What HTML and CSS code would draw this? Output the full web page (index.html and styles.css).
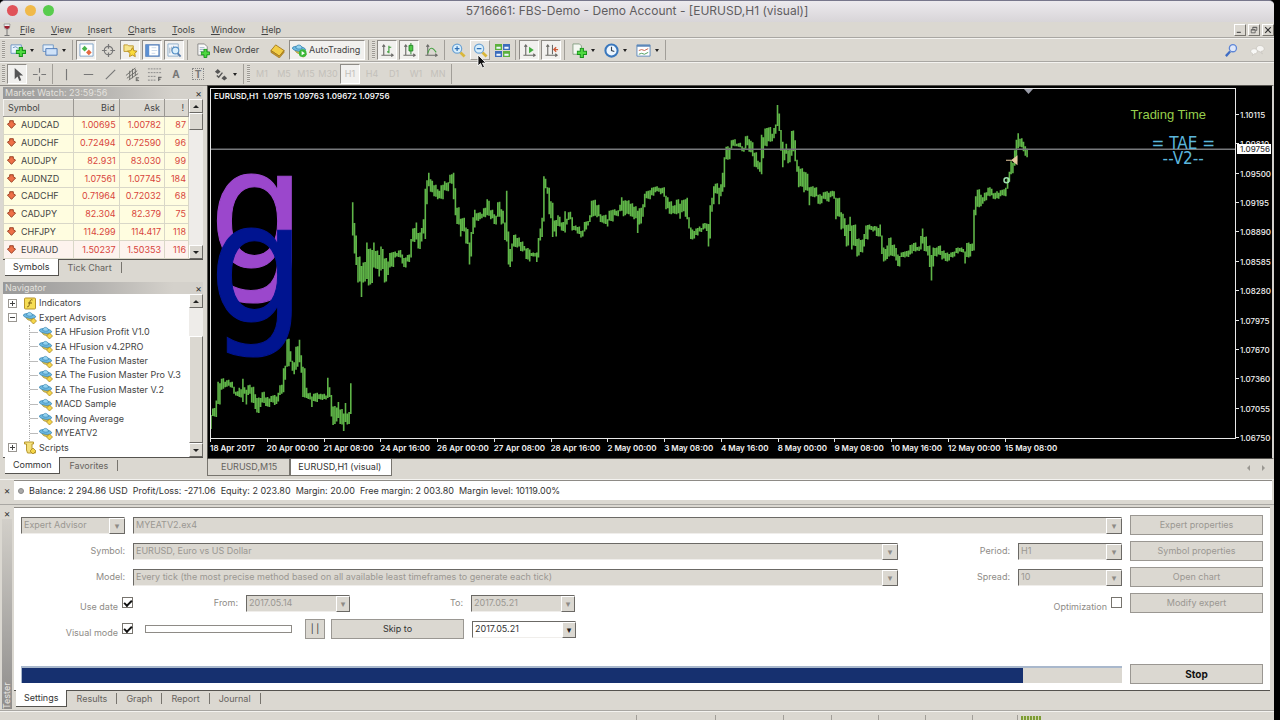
FILE: index.html
```html
<!DOCTYPE html>
<html lang="en">
<head>
<meta charset="UTF-8">
<title>FBS-Demo - Demo Account</title>
<link rel="stylesheet" href="styles.css">
</head>
<body>
<!-- shared icons -->
<svg class="defs" width="0" height="0">
  <symbol id="i-plus" viewBox="0 0 10 10"><path d="M3.5 .5h3v3h3v3h-3v3h-3v-3h-3v-3h3z" fill="#4fd83f" stroke="#16931a"/></symbol>
  <symbol id="i-down" viewBox="0 0 10 10"><path d="M3 .8h4v2.2l2.500 1.500L5 9.300.5 4.500 3 3z" fill="#ee7048" stroke="#8f3218"/></symbol>
  <symbol id="i-ea" viewBox="0 0 14 13"><path d="M3 6c0 4 8 5 8 0z" fill="#d8c050" stroke="#9c8428" stroke-width=".6"/><ellipse cx="6.500" cy="5" rx="6.200" ry="2.300" fill="#6db9e2" stroke="#3684b0" stroke-width=".7" transform="rotate(8 6.500 5)"/><path d="M3.500 4.200C4 .4 9 .4 9.500 4.500 8 5.500 5 5.400 3.500 4.200z" fill="#93d2f0" stroke="#3684b0" stroke-width=".7"/><path d="M10.500 7l3 3-3 3-3-3z" fill="#f5d648" stroke="#a07c18" stroke-width=".7"/></symbol>
  <symbol id="i-axes" viewBox="0 0 16 16"><path d="M4 2v11M1.500 13h12.500M2.500 4L4 2l1.500 2M12 11.500l2 1.500-2 1.500" fill="none" stroke="#6b6b68" stroke-width="1.200"/></symbol>
  <symbol id="i-lens" viewBox="0 0 16 16"><path d="M10 10l4.500 4.500" stroke="#d9b73a" stroke-width="3"/><circle cx="6.500" cy="6" r="4.900" fill="#d9effc" stroke="#6da3d4" stroke-width="1.300"/></symbol>
</svg>

<div class="window">
  <header class="titlebar">
    <span class="lights"><i class="red"></i><i class="yellow"></i><i class="green"></i></span>
    <h1>5716661: FBS-Demo - Demo Account - [EURUSD,H1 (visual)]</h1>
  </header>

  <nav class="menubar">
    <svg class="glass" viewBox="0 0 10 14"><path d="M2 1h6l-.5 4c-.5 2-4.500 2-5 0z" fill="#eee" stroke="#777" stroke-width=".6"/><path d="M2.300 3h5.400c0 4-5 4-5.400 0z" fill="#9c2030"/><path d="M5 6.500V12M2.500 12.500h5" stroke="#777"/></svg>
    <button><u>F</u>ile</button>
    <button><u>V</u>iew</button>
    <button><u>I</u>nsert</button>
    <button><u>C</u>harts</button>
    <button><u>T</u>ools</button>
    <button><u>W</u>indow</button>
    <button><u>H</u>elp</button>
    <span class="mdi">
      <button aria-label="Minimize"><svg viewBox="0 0 10 10"><path d="M1 8h5" stroke="#555" stroke-width="1.500"/></svg></button>
      <button aria-label="Restore"><svg viewBox="0 0 10 10"><path d="M3.500 4V1.500h5v4H7M1.500 4.500h5v4h-5zM3.500 2h5M1.500 5h5" fill="none" stroke="#555"/></svg></button>
      <button aria-label="Close"><svg viewBox="0 0 10 10"><path d="M1.500 1.500l7 7M8.500 1.500l-7 7" stroke="#333" stroke-width="1.500"/></svg></button>
    </span>
  </nav>

  <div class="toolbar main-tools">
    <i class="grip"></i>
    <button class="tool drop" aria-label="New chart"><svg viewBox="0 0 18 16"><path d="M1 2h11v9H1z" fill="#eaf3fd" stroke="#6f96c4"/><path d="M3 5l3-1 3 2" fill="none" stroke="#6f96c4"/><use href="#i-plus" x="6" y="4" width="11" height="11"/></svg></button>
    <button class="tool drop" aria-label="Profiles"><svg viewBox="0 0 18 16"><path d="M1 2h11v7H1z" fill="#e2eefb" stroke="#6f96c4"/><path d="M4 6h12v7H4z" fill="#cfe2f8" stroke="#4b78b8"/></svg></button>
    <i class="sep"></i>
    <button class="tool on" aria-label="Market Watch"><svg viewBox="0 0 16 16"><path d="M1 1h14v13H1z" fill="#fff" stroke="#7ea2c8"/><path d="M6 3l3 3-3 3-3-3z" fill="#49b54a"/><path d="M10.500 7l3 3-3 3-3-3z" fill="#e46a42"/></svg></button>
    <button class="tool" aria-label="Data Window"><svg viewBox="0 0 16 16"><circle cx="8" cy="8" r="4.500" fill="none" stroke="#777" stroke-width="1.300"/><path d="M8 1v5M8 10v5M1 8h5M10 8h5" stroke="#777" stroke-width="1.300"/></svg></button>
    <button class="tool on" aria-label="Navigator"><svg viewBox="0 0 16 16"><path d="M1 2h4l1 1h5v6H1z" fill="#f7e58c" stroke="#c09a34"/><path d="M10 5l1.600 3.200 3.400.5-2.500 2.400.6 3.400L10 12.900l-3.100 1.600.6-3.400L5 8.700l3.400-.5z" fill="#fbdc3c" stroke="#b58b1e"/></svg></button>
    <button class="tool on" aria-label="Terminal"><svg viewBox="0 0 16 16"><path d="M1 2h14v12H1z" fill="#fff" stroke="#4b78b8" stroke-width="1.400"/><path d="M1 2h3.500v12H1z" fill="#5b8fd2"/><path d="M7 5h5M7 8h6M7 11h4" stroke="#c9d8ea"/></svg></button>
    <button class="tool on" aria-label="Strategy Tester"><svg viewBox="0 0 16 16"><path d="M1 1h11v13H1z" fill="#f2f6fb" stroke="#8eacc9"/><path d="M3 11V5M5 9V4M7 8V3" stroke="#9ab"/><circle cx="9" cy="8" r="3.600" fill="#d9effc" stroke="#5791c7" stroke-width="1.200"/><path d="M11.500 11l3 3.500" stroke="#5a7fae" stroke-width="2"/></svg></button>
    <i class="sep"></i>
    <button class="tool wide order"><svg viewBox="0 0 16 16"><path d="M2 1h7l3 3v9H2z" fill="#fafafa" stroke="#8a8a88"/><path d="M4 5h5M4 7h5M4 9h3" stroke="#9ab0c8"/><use href="#i-plus" x="5" y="6" width="10" height="10"/></svg>New Order</button>
    <button class="tool" aria-label="MetaEditor"><svg viewBox="0 0 16 16"><path d="M1 8l5-6 9 6-5 6z" fill="#f2cd46" stroke="#a77c1c"/><path d="M1 8v2l9 6 5-6V8l-5 6z" fill="#c99828" stroke="#94701c" stroke-width=".6"/></svg></button>
    <button class="tool wide on auto"><svg viewBox="0 0 14 13"><use href="#i-ea" width="14" height="13"/><circle cx="10" cy="9" r="3.600" fill="#3cb838"/><path d="M9 7l3 2-3 2z" fill="#fff"/></svg>AutoTrading</button>
    <i class="sep"></i>
    <i class="grip"></i>
    <button class="tool on" aria-label="Bar Chart"><svg viewBox="0 0 16 16"><use href="#i-axes" width="16" height="16"/><path d="M9.500 3v8M7.500 9.500h2M9.500 4.500h2.500" stroke="#3c9c3a" stroke-width="1.200"/></svg></button>
    <button class="tool on" aria-label="Candlesticks"><svg viewBox="0 0 16 16"><use href="#i-axes" width="16" height="16"/><path d="M9.500 0v12" stroke="#25852a"/><path d="M7.500 2.500h4v6h-4z" fill="#4ecb46" stroke="#25852a"/></svg></button>
    <button class="tool" aria-label="Line Chart"><svg viewBox="0 0 16 16"><use href="#i-axes" width="16" height="16"/><path d="M4 11c2-7 5-7 9-1" fill="none" stroke="#4aa346" stroke-width="1.200"/></svg></button>
    <i class="sep"></i>
    <button class="tool" aria-label="Zoom In"><svg viewBox="0 0 16 16"><use href="#i-lens" width="16" height="16"/><path d="M4 6h5M6.500 3.500v5" stroke="#2f6fb5" stroke-width="1.300"/></svg></button>
    <button class="tool hover" aria-label="Zoom Out"><svg viewBox="0 0 16 16"><use href="#i-lens" width="16" height="16"/><path d="M4 6h5" stroke="#2f6fb5" stroke-width="1.300"/></svg></button>
    <button class="tool" aria-label="Tile Windows"><svg viewBox="0 0 16 16"><path d="M0 1h7.500v6.500H0zM8.500 8.500H16V15H8.500z" fill="#5cb13c"/><path d="M8.500 1H16v6.500H8.500zM0 8.500h7.500V15H0z" fill="#3c6cbc"/><path d="M1.500 4H6v2H1.500zM10 4h4.500v2H10zM1.500 11.500H6v2H1.500zM10 11.500h4.500v2H10z" fill="#eef6ff"/></svg></button>
    <i class="sep"></i>
    <button class="tool on" aria-label="Auto Scroll"><svg viewBox="0 0 16 16"><use href="#i-axes" width="16" height="16"/><path d="M7.500 4l5 3.500-5 3.500z" fill="#3fae3c"/></svg></button>
    <button class="tool on" aria-label="Chart Shift"><svg viewBox="0 0 16 16"><use href="#i-axes" width="16" height="16"/><path d="M9 2v10" stroke="#555"/><path d="M15 7h-4M13 4.500L10.500 7 13 9.500" fill="none" stroke="#cf5836" stroke-width="1.400"/></svg></button>
    <i class="sep"></i>
    <button class="tool drop" aria-label="Indicators"><svg viewBox="0 0 18 16"><path d="M2 1h7l2 2v9H2z" fill="#f4f8f2" stroke="#85a183"/><use href="#i-plus" x="6" y="5" width="11" height="11"/></svg></button>
    <button class="tool drop" aria-label="Periods"><svg viewBox="0 0 18 16"><circle cx="9" cy="8" r="6.500" fill="#edf6ff" stroke="#3a78bd" stroke-width="2.200"/><path d="M9 4v4l3 1" fill="none" stroke="#345" stroke-width="1.200"/></svg></button>
    <button class="tool drop" aria-label="Templates"><svg viewBox="0 0 18 16"><path d="M2 2h14v12H2z" fill="#fff" stroke="#5c88ba"/><path d="M2 3h14" stroke="#5c88ba" stroke-width="2"/><path d="M4 8l3-1 3 1 4-2" fill="none" stroke="#c4604a"/><path d="M4 12l3-1 3 1 4-2" fill="none" stroke="#4a9a58"/></svg></button>
    <i class="sep"></i>
    <span class="right">
      <button class="tool" aria-label="Search"><svg viewBox="0 0 16 16"><path d="M6.500 9L2 14" stroke="#3e6cc4" stroke-width="2.400"/><circle cx="9.500" cy="5.500" r="3.800" fill="#dfe8fa" stroke="#5e86d6" stroke-width="1.400"/></svg></button>
      <button class="tool" aria-label="Chat"><svg viewBox="0 0 18 14"><path d="M12 1c6 0 7 7 1 7l2 3-4-3C6 7 7 1 12 1z" fill="#f6f5f2" stroke="#c2bfb8" stroke-width=".7"/><path d="M5 5c5 0 5 6 0 6l-2 2v-2.500C-1 9 1 5 5 5z" fill="#f8f8f6" stroke="#c2bfb8" stroke-width=".7"/></svg></button>
    </span>
  </div>

  <div class="toolbar line-tools">
    <i class="grip"></i>
    <button class="tool on" aria-label="Cursor"><svg viewBox="0 0 16 16"><path d="M5 1v12l3-3 2 5 2-1-2-5h4z" fill="#555"/></svg></button>
    <button class="tool" aria-label="Crosshair"><svg viewBox="0 0 16 16"><path d="M8 1v5M8 10v5M1 8h5M10 8h5" stroke="#777" stroke-width="1.200"/></svg></button>
    <i class="sep"></i>
    <button class="tool" aria-label="Vertical Line"><svg viewBox="0 0 16 16"><path d="M8 2v12" stroke="#777" stroke-width="1.200"/></svg></button>
    <button class="tool" aria-label="Horizontal Line"><svg viewBox="0 0 16 16"><path d="M3 8h10" stroke="#777" stroke-width="1.200"/></svg></button>
    <button class="tool" aria-label="Trendline"><svg viewBox="0 0 16 16"><path d="M3 13L13 3" stroke="#777" stroke-width="1.200"/></svg></button>
    <button class="tool" aria-label="Equidistant Channel"><svg viewBox="0 0 16 16"><path d="M1 9L11 1M2 12L13 4M4 14L14 7M5 4v9M8 2v10M11 2v7M12 11v4M12 11.500h3M12 13h2M12 14.500h3" stroke="#6b6b68"/></svg></button>
    <button class="tool" aria-label="Fibonacci"><svg viewBox="0 0 16 16"><path d="M1 2h14M1 6h14M1 10h9M1 14h9" stroke="#888" stroke-dasharray="2 1"/><path d="M12.500 15v-4.500M12.500 11h3M12.500 13h2" stroke="#555"/></svg></button>
    <button class="tool letter">A</button>
    <button class="tool letter boxed"><span>T</span></button>
    <button class="tool drop" aria-label="Arrows"><svg viewBox="0 0 18 16"><path d="M5 2l3 3-3 2.500L2 5z" fill="#555"/><path d="M4 9l2 2 4-5" fill="none" stroke="#555" stroke-width="1.500"/><path d="M12 9l3 3-3 2.500L9 12z" fill="#555"/></svg></button>
    <i class="sep"></i>
    <i class="grip"></i>
    <button class="tool tf" disabled>M1</button>
    <button class="tool tf" disabled>M5</button>
    <button class="tool tf" disabled>M15</button>
    <button class="tool tf" disabled>M30</button>
    <button class="tool tf on" disabled>H1</button>
    <button class="tool tf" disabled>H4</button>
    <button class="tool tf" disabled>D1</button>
    <button class="tool tf" disabled>W1</button>
    <button class="tool tf" disabled>MN</button>
    <i class="sep"></i>
  </div>

  <div class="workspace">
    <aside class="side">
      <section class="panel watch">
        <h2>Market Watch: 23:59:56<button aria-label="Close">×</button></h2>
        <div class="panel-body">
          <table>
            <thead><tr><th>Symbol</th><th>Bid</th><th>Ask</th><th>!</th></tr></thead>
            <tbody>
              <tr><td><svg><use href="#i-down"/></svg>AUDCAD</td><td>1.00695</td><td>1.00782</td><td>87</td></tr>
              <tr><td><svg><use href="#i-down"/></svg>AUDCHF</td><td>0.72494</td><td>0.72590</td><td>96</td></tr>
              <tr><td><svg><use href="#i-down"/></svg>AUDJPY</td><td>82.931</td><td>83.030</td><td>99</td></tr>
              <tr><td><svg><use href="#i-down"/></svg>AUDNZD</td><td>1.07561</td><td>1.07745</td><td>184</td></tr>
              <tr><td><svg><use href="#i-down"/></svg>CADCHF</td><td>0.71964</td><td>0.72032</td><td>68</td></tr>
              <tr><td><svg><use href="#i-down"/></svg>CADJPY</td><td>82.304</td><td>82.379</td><td>75</td></tr>
              <tr><td><svg><use href="#i-down"/></svg>CHFJPY</td><td>114.299</td><td>114.417</td><td>118</td></tr>
              <tr class="alt"><td><svg><use href="#i-down"/></svg>EURAUD</td><td>1.50237</td><td>1.50353</td><td>116</td></tr>
            </tbody>
          </table>
          <div class="scroll"><b class="up"></b><i></i><b class="dn"></b></div>
        </div>
        <div class="tabs"><button class="current">Symbols</button><button>Tick Chart</button></div>
      </section>

      <section class="panel navigator">
        <h2>Navigator<button aria-label="Close">×</button></h2>
        <div class="panel-body">
          <ul class="tree">
            <li><s class="plus"></s><svg viewBox="0 0 13 13"><rect x="1" y="1" width="11" height="11" rx="1" fill="#f6dd55" stroke="#b8942c"/><path d="M9 3c-2-1-2.500 1-3 3.500S5 10.500 3.500 9.500M4.500 6h4" fill="none" stroke="#7a5c10"/></svg>Indicators</li>
            <li><s class="minus"></s><svg><use href="#i-ea"/></svg>Expert Advisors</li>
            <li class="child"><svg><use href="#i-ea"/></svg>EA HFusion Profit V1.0</li>
            <li class="child"><svg><use href="#i-ea"/></svg>EA HFusion v4.2PRO</li>
            <li class="child"><svg><use href="#i-ea"/></svg>EA The Fusion Master</li>
            <li class="child"><svg><use href="#i-ea"/></svg>EA The Fusion Master Pro V.3</li>
            <li class="child"><svg><use href="#i-ea"/></svg>EA The Fusion Master V.2</li>
            <li class="child"><svg><use href="#i-ea"/></svg>MACD Sample</li>
            <li class="child"><svg><use href="#i-ea"/></svg>Moving Average</li>
            <li class="child"><svg><use href="#i-ea"/></svg>MYEATV2</li>
            <li><s class="plus"></s><svg viewBox="0 0 13 13"><path d="M1 1h9v2H8.500v6H11l1 3H4L3 9V3H1z" fill="#f3df7a" stroke="#b8982e"/><path d="M9.500 7l3 3-3 3-3-3z" fill="#f5d648" stroke="#a07c18" stroke-width=".7"/></svg>Scripts</li>
          </ul>
          <div class="scroll low"><b class="up"></b><i></i><b class="dn"></b></div>
        </div>
        <div class="tabs"><button class="current">Common</button><button>Favorites</button></div>
      </section>
    </aside>

    <main class="charts">
      <div class="chart">
        <div class="plot">
          <svg class="bars" viewBox="211 90 1024 348" preserveAspectRatio="none">
            <path id="bars"/>
            <path class="bid" d="M211 150h1024"/>
            <path d="M1024 90h9l-4.500 5z" fill="#9a9ca8"/>
            <path d="M1006 161h6l5-4v8l-5-4" fill="#e8c9a0" stroke="#e8c9a0"/>
            <circle cx="1006.500" cy="181" r="2.500" fill="none" stroke="#9fe0b0" stroke-width="1.500"/>
          </svg>
          <p class="ohlc">EURUSD,H1&nbsp; 1.09715 1.09763 1.09672 1.09756</p>
          <span class="big-g purple">g</span>
          <span class="big-g blue">g</span>
          <span class="note time">Trading Time</span>
          <span class="note tae">= TAE =<br>--V2--</span>
        </div>
        <div class="prices">
          <span>1.10115</span><span>1.09810</span><span>1.09500</span><span>1.09195</span><span>1.08890</span><span>1.08585</span><span>1.08280</span><span>1.07975</span><span>1.07670</span><span>1.07360</span><span>1.07055</span><span>1.06750</span>
          <b>1.09756</b>
        </div>
        <div class="times">
          <span>18 Apr 2017</span><span>20 Apr 00:00</span><span>21 Apr 08:00</span><span>24 Apr 16:00</span><span>26 Apr 00:00</span><span>27 Apr 08:00</span><span>28 Apr 16:00</span><span>2 May 00:00</span><span>3 May 08:00</span><span>4 May 16:00</span><span>8 May 00:00</span><span>9 May 08:00</span><span>10 May 16:00</span><span>12 May 00:00</span><span>15 May 08:00</span>
        </div>
      </div>
      <div class="chart-tabs">
        <button>EURUSD,M15</button><button class="current">EURUSD,H1 (visual)</button>
        <span class="arrows"><i></i><i></i></span>
      </div>
    </main>
  </div>

  <section class="balance">
    <button class="close" aria-label="Close">×</button>
    <p><i></i>Balance: 2 294.86 USD&nbsp; Profit/Loss: -271.06&nbsp; Equity: 2 023.80&nbsp; Margin: 20.00&nbsp; Free margin: 2 003.80&nbsp; Margin level: 10119.00%</p>
  </section>

  <section class="tester">
    <div class="tester-side"><button class="close" aria-label="Close">×</button><span>Tester</span></div>
    <div class="tester-main">
      <form class="settings">
        <div class="row">
          <span class="combo kind"><select aria-label="Type" disabled><option>Expert Advisor</option></select></span>
          <span class="combo grow"><select aria-label="Expert" disabled><option>MYEATV2.ex4</option></select></span>
          <button class="btn" type="button" disabled>Expert properties</button>
        </div>
        <div class="row">
          <label class="first" for="symbol">Symbol:</label>
          <span class="combo grow"><select id="symbol" disabled><option>EURUSD, Euro vs US Dollar</option></select></span>
          <label class="second" for="period">Period:</label>
          <span class="combo kind"><select id="period" disabled><option>H1</option></select></span>
          <button class="btn" type="button" disabled>Symbol properties</button>
        </div>
        <div class="row">
          <label class="first" for="model">Model:</label>
          <span class="combo grow"><select id="model" disabled><option>Every tick (the most precise method based on all available least timeframes to generate each tick)</option></select></span>
          <label class="second" for="spread">Spread:</label>
          <span class="combo kind"><select id="spread" disabled><option>10</option></select></span>
          <button class="btn" type="button" disabled>Open chart</button>
        </div>
        <div class="row">
          <label class="check">Use date<input type="checkbox" checked></label>
          <label class="from" for="from">From:</label>
          <span class="combo kind date"><select id="from" disabled><option>2017.05.14</option></select></span>
          <label class="to" for="to">To:</label>
          <span class="combo kind date"><select id="to" disabled><option>2017.05.21</option></select></span>
          <label class="check optim">Optimization<input type="checkbox"></label>
          <button class="btn" type="button" disabled>Modify expert</button>
        </div>
        <div class="row">
          <label class="check">Visual mode<input type="checkbox" checked></label>
          <input class="speed" type="range" aria-label="Speed">
          <button class="btn pause" type="button">| |</button>
          <button class="btn skip" type="button">Skip to</button>
          <span class="combo kind date"><select aria-label="Skip to date"><option>2017.05.21</option></select></span>
        </div>
        <div class="row run">
          <progress value="91" max="100" aria-label="Test progress"></progress>
          <button class="btn stop" type="button">Stop</button>
        </div>
      </form>
      <div class="tabs">
        <button class="current">Settings</button><button>Results</button><button>Graph</button><button>Report</button><button>Journal</button>
      </div>
    </div>
  </section>

  <footer class="status"><i></i><i></i><i></i><i></i><i></i><i></i><i></i><i></i><b></b></footer>
</div>
<svg class="pointer" viewBox="0 0 10 15"><path d="M1 1v11l2.500-2.500L5.500 14l2-1-2-4H9z" fill="#111" stroke="#fff" stroke-width=".8"/></svg>
<script src="script.js"></script>
</body>
</html>
```
FILE: styles.css
```css
* {
  box-sizing: border-box;
}
body {
  margin: 0;
  height: 100vh;
  overflow: hidden;
  background: #000;
  color: #444;
  font: 9px/12px Inter, "Liberation Sans", sans-serif;
}
button, select, input {
  font: inherit;
  color: inherit;
  margin: 0;
}
button {
  padding: 0;
  border: 0;
  background: none;
  white-space: nowrap;
}
h1, h2, p, ul {
  margin: 0;
  padding: 0;
  font-weight: normal;
}
.defs {
  display: block;
}
.window {
  height: 100vh;
  margin-right: 6px;
  display: flex;
  flex-direction: column;
  background: #dbd8d1;
  border-top: 1px solid #77778c;
  border-radius: 5px 5px 0 0;
  overflow: hidden;
}

/* title and menu */
.titlebar {
  height: 21px;
  flex: none;
  position: relative;
  background: linear-gradient(#eceaee, #d8d5d8);
}
.titlebar h1 {
  font-size: 12px;
  line-height: 20px;
  text-align: center;
  color: #5f5d5f;
}
.lights {
  position: absolute;
  left: 7px;
  top: 4px;
  display: flex;
  gap: 7px;
}
.lights i {
  width: 11px;
  height: 11px;
  border-radius: 50%;
  background: #e0525a;
}
.lights .yellow { background: #f0b94a; }
.lights .green { background: #58cc4e; }

.menubar {
  height: 15px;
  flex: none;
  display: flex;
  align-items: center;
  gap: 16px;
  padding-left: 2px;
}
.menubar u {
  text-underline-offset: 1px;
}
.glass {
  width: 10px;
  height: 14px;
  margin-right: -8px;
}
.mdi {
  margin-left: auto;
  display: flex;
  gap: 2px;
}
.mdi button {
  width: 12px;
  height: 12px;
  padding: 1px;
  border: 1px solid;
  border-color: #fff #77746e #77746e #fff;
}
.mdi svg {
  display: block;
  width: 100%;
}

/* toolbars */
.toolbar {
  height: 24px;
  flex: none;
  display: flex;
  align-items: center;
  border-top: 1px solid #a9a7a3;
  box-shadow: inset 0 1px #f4f3f0;
  padding: 1px 0 0 1px;
}
.grip {
  width: 3px;
  height: 18px;
  margin: 0 1px;
  background: repeating-linear-gradient(#9d9a94 0 1px, #e4e2dd 1px 2px);
}
.sep {
  width: 1px;
  height: 20px;
  margin: 0 2px;
  background: #a19e98;
}
.tool {
  width: 20px;
  height: 20px;
  margin: 0 1px;
  border: 1px solid transparent;
  display: flex;
  align-items: center;
  justify-content: center;
  font-size: 9px;
}
.tool svg {
  width: 15px;
  height: 15px;
  flex: none;
}
.tool.on {
  background: #f1f0ee;
  border-color: #8e8b86 #fff #fff #8e8b86;
}
.tool.hover {
  background: #e8e6e2;
  border-color: #fff #a19e98 #a19e98 #fff;
}
.tool.drop {
  width: 30px;
  gap: 3px;
}
.tool.drop svg {
  width: 17px;
}
.tool.drop::after {
  content: "";
  border: 2px solid transparent;
  border-top: 3px solid #222;
  border-bottom: 0;
}
.tool.wide {
  width: auto;
  gap: 2px;
  padding: 0 5px 0 4px;
}
.tool.auto {
  padding: 0 4px 0 2px;
}
.main-tools .right {
  margin-left: auto;
  display: flex;
  gap: 4px;
  padding-right: 6px;
}
.letter {
  font-weight: bold;
  font-size: 10px;
  color: #777;
}
.boxed span {
  border: 1px dotted #888;
  width: 12px;
  line-height: 10px;
}
.tool.tf {
  color: #c3c0ba;
}

/* left side */
.workspace {
  flex: 1;
  min-height: 0;
  display: flex;
}
.side {
  width: 207px;
  padding: 1px 4px 3px 3px;
  display: flex;
  flex-direction: column;
  gap: 4px;
  border-top: 1px solid #8e8b86;
}
.panel {
  display: flex;
  flex-direction: column;
  min-height: 0;
}
.watch {
  height: 191px;
}
.navigator {
  flex: 1;
}
.panel h2 {
  height: 12px;
  flex: none;
  display: flex;
  justify-content: space-between;
  padding-left: 2px;
  font-size: 9px;
  line-height: 12px;
  color: #e4e2de;
  background: linear-gradient(90deg, #999 0%, #b3b1ae 45%, #d4d1cb 85%);
}
.panel h2 button, .close {
  width: 9px;
  color: #333;
  font-size: 10px;
  line-height: 12px;
}
.panel-body {
  flex: 1;
  min-height: 0;
  display: flex;
  background: #fff;
}
.panel table {
  flex: 1;
  border-collapse: collapse;
  table-layout: fixed;
}
.panel th {
  height: 17px;
  padding: 0 4px;
  font-weight: normal;
  text-align: right;
  background: #dbd8d1;
  border: 1px solid;
  border-color: #f4f3f0 #9a9792 #9a9792 #f4f3f0;
}
.panel th:first-child {
  width: 70px;
  text-align: left;
}
.panel th:last-child {
  width: 24px;
}
.panel td {
  padding: 0 3px;
  text-align: right;
  color: #d8453c;
  background: #fffde0;
  border: 1px solid #d9d7c8;
}
.panel td:first-child {
  color: #444;
  text-align: left;
}
.panel td:last-child {
  padding: 0 2px;
}
.alt td {
  background: #fdf3ee;
}
.panel td svg {
  width: 9px;
  height: 9px;
  margin-right: 5px;
  vertical-align: -1px;
}
.scroll {
  width: 14px;
  display: flex;
  flex-direction: column;
  background: #eeece9;
}
.scroll b, .scroll i {
  height: 14px;
  background: #dbd8d1;
  border: 1px solid;
  border-color: #fff #6b6965 #6b6965 #fff;
}
.scroll b {
  display: flex;
  align-items: center;
  justify-content: center;
}
.scroll i {
  height: 17px;
  margin-bottom: auto;
}
.scroll.low i {
  height: auto;
  flex: 1;
  margin: 28px 0 0;
}
.scroll b::after {
  content: "";
  border: 3px solid transparent;
  border-bottom: 3px solid #222;
  border-top: 0;
}
.scroll .dn::after {
  border-top: 3px solid #222;
  border-bottom: 0;
}

.tabs {
  height: 19px;
  flex: none;
  display: flex;
  align-items: flex-start;
  border-top: 1px solid #55534f;
  padding-left: 2px;
}
.tabs button {
  height: 16px;
  padding-left: 9px;
  color: #66635e;
}
.tabs .current {
  margin-top: -1px;
  height: 17px;
  padding: 0 8px;
  color: #333;
  background: #fff;
  border: solid #55534f;
  border-width: 0 1px 1px 0;
}
.tabs button:not(.current)::after {
  content: "";
  border-right: 1px solid #77746e;
  margin-left: 9px;
}

.tree {
  flex: 1;
  list-style: none;
  display: flex;
  flex-direction: column;
  padding: 2px 0 2px 5px;
}
.tree li {
  flex: 1;
  display: flex;
  align-items: center;
  gap: 2px;
  white-space: nowrap;
}
.tree svg {
  width: 14px;
  height: 13px;
}
.tree s {
  width: 9px;
  height: 9px;
  margin-right: 4px;
  border: 1px solid #9a9792;
  background: linear-gradient(#444, #444) center / 5px 1px no-repeat;
}
.tree .plus {
  background: linear-gradient(#444, #444) center / 5px 1px no-repeat, linear-gradient(#444, #444) center / 1px 5px no-repeat;
}
.tree .child {
  margin-left: 21px;
  padding-left: 9px;
  background: linear-gradient(#bbb, #bbb) 0 50% / 8px 1px no-repeat;
  border-left: 1px dotted #aaa;
}

/* chart */
.charts {
  flex: 1;
  min-width: 0;
  display: flex;
  flex-direction: column;
}
.chart {
  flex: 1;
  min-height: 0;
  display: grid;
  grid-template-columns: 1fr 35px;
  grid-template-rows: 1fr 18px;
  padding: 2px 1px 1px 2px;
  background: #000;
  border: 1px solid #55534f;
  border-right: 2px solid #d2d0cc;
  color: #f2f2f2;
}
.plot {
  position: relative;
  border: 1px solid #e8e8e8;
}
.bars {
  display: block;
  position: absolute;
  width: 100%;
  height: 100%;
}
#bars {
  fill: none;
  stroke: #5fb548;
  stroke-width: 1.6;
}
.bid {
  stroke: #77797c;
  stroke-width: 1.5;
}
.ohlc {
  position: absolute;
  left: 3px;
  top: 1px;
  font-size: 8px;
  font-weight: 600;
}
.big-g {
  position: absolute;
  left: -2px;
  font: 168px/168px "DejaVu Sans Condensed", "DejaVu Sans", sans-serif;
  -webkit-text-stroke: 1px;
}
.purple {
  top: 37px;
  color: #9b47cc;
}
.blue {
  top: 91px;
  color: #001490;
}
.note {
  position: absolute;
  text-align: center;
}
.time {
  right: 29px;
  top: 18px;
  font: 13px/16px "Liberation Sans", sans-serif;
  color: #97cf4c;
}
.tae {
  right: 20px;
  top: 47px;
  font: 17px/15px "DejaVu Sans Condensed", sans-serif;
  color: #5cb6dc;
}
.prices {
  position: relative;
  display: flex;
  flex-direction: column;
  justify-content: space-between;
  padding-top: 22px;
  margin-bottom: -4px;
  font-size: 8px;
  font-weight: 500;
  line-height: 10px;
  white-space: nowrap;
}
.prices span::before {
  content: "";
  display: inline-block;
  width: 3px;
  height: 1px;
  margin-right: 1px;
  vertical-align: 3px;
  background: #e8e8e8;
}
.prices b {
  position: absolute;
  left: 1px;
  right: 0;
  top: 56px;
  padding-left: 3px;
  font-weight: 500;
  background: #fff;
  color: #333;
}
.times {
  width: 83%;
  display: grid;
  grid-template-columns: repeat(15, 1fr);
  font-size: 8px;
  font-weight: 600;
  line-height: 12px;
  white-space: nowrap;
}
.times span::before {
  content: "";
  display: block;
  width: 1px;
  height: 3px;
  background: #e8e8e8;
}
.chart-tabs {
  height: 20px;
  flex: none;
  display: flex;
  align-items: flex-start;
}
.chart-tabs button {
  height: 17px;
  padding: 0 12px 0 13px;
  color: #66635e;
  border: solid #77746e;
  border-width: 0 1px 1px 1px;
}
.chart-tabs .current {
  padding: 0 10px 0 7px;
  background: #fff;
  color: #333;
}
.arrows {
  margin-left: auto;
  display: flex;
  gap: 12px;
  padding: 6px 9px;
}
.arrows i {
  border: 3px solid transparent;
  border-right: 3px solid #9a9792;
  border-left: 0;
}
.arrows i:last-child {
  border-left: 3px solid #9a9792;
  border-right: 0;
}

/* balance line */
.balance {
  height: 26px;
  flex: none;
  display: flex;
  padding: 0 2px 4px 2px;
  border-top: 1px solid #f4f3f0;
  border-bottom: 1px solid #a9a7a3;
}
.close {
  flex: none;
  width: 10px;
}
.balance p {
  flex: 1;
  margin-left: 2px;
  padding-left: 4px;
  display: flex;
  align-items: center;
  background: #fff;
  border-top: 1px solid #8e8b86;
  color: #333;
}
.balance i {
  width: 6px;
  height: 6px;
  margin-right: 5px;
  border-radius: 50%;
  background: #aaa;
  border: 1px solid #888;
}

/* tester */
.tester {
  height: 206px;
  flex: none;
  display: flex;
  padding: 2px 4px 1px 2px;
  border-bottom: 1px solid #a9a7a3;
}
.tester-side {
  width: 12px;
  display: flex;
  flex-direction: column;
}
.tester-side span {
  flex: 1;
  margin-right: 2px;
  writing-mode: vertical-rl;
  transform: rotate(180deg);
  line-height: 10px;
  color: #e8e6e2;
  background: linear-gradient(0deg, #d2cfc9, #a9a7a4 60%, #8f8d8b);
}
.tester-main {
  flex: 1;
  display: flex;
  flex-direction: column;
}
.settings {
  flex: 1;
  display: flex;
  flex-direction: column;
  gap: 6px;
  padding: 7px 7px 0 7px;
  background: #fff;
  border-top: 1px solid #8e8b86;
  color: #8e8b86;
}
.row {
  height: 20px;
  flex: none;
  display: flex;
  align-items: center;
  gap: 8px;
}
.run {
  margin-top: 19px;
}
.first,
.second {
  width: 104px;
  text-align: right;
}
.check {
  width: 112px;
  height: 20px;
  display: flex;
  align-items: flex-end;
  justify-content: flex-end;
  gap: 4px;
}
.check input {
  appearance: none;
  width: 11px;
  height: 11px;
  margin: 0 0 5px;
  border: 1px solid #77746e;
  background: #fff;
  display: grid;
  place-content: center;
}
.check input:checked::before {
  content: "";
  width: 6px;
  height: 3px;
  border: solid #111;
  border-width: 0 0 2px 2px;
  transform: rotate(-45deg);
}
.optim {
  margin-left: auto;
}
.from {
  width: 97px;
  text-align: right;
}
.to {
  width: 105px;
  text-align: right;
}
.combo {
  position: relative;
  display: flex;
  height: 17px;
}
.kind {
  width: 104px;
}
.grow {
  flex: 1;
}
.combo select {
  appearance: none;
  width: 100%;
  padding: 0 16px 0 2px;
  border: 1px solid;
  border-color: #6b6965 #f0eeeb #f0eeeb #6b6965;
  border-radius: 0;
  background: #fff;
  color: #333;
}
.combo select:disabled {
  opacity: 1;
  background: #dbd8d1;
  color: #9a9792;
}
.combo::after {
  content: "▾";
  position: absolute;
  right: 0;
  top: 1px;
  bottom: 0;
  width: 14px;
  text-align: center;
  line-height: 14px;
  font-family: "DejaVu Sans", sans-serif;
  background: #dbd8d1;
  border: 1px solid;
  border-color: #fff #6b6965 #6b6965 #fff;
  pointer-events: none;
}
.date::after {
  width: 12px;
}
.skip + .date::after {
  color: #222;
}
.btn {
  width: 133px;
  height: 20px;
  background: #dbd8d1;
  border: 1px solid #9a9792;
  color: #333;
}
.btn:disabled {
  color: #9a9792;
}
.speed {
  appearance: none;
  width: 147px;
  height: 8px;
  margin: 0 5px 0 4px;
  background: #fff;
  border: 1px solid #8e8b86;
}
.speed::-webkit-slider-thumb {
  appearance: none;
  width: 0;
}
.pause {
  width: 20px;
  margin-right: -2px;
}
.stop {
  font-weight: bold;
  font-size: 10px;
  color: #111;
}
progress {
  appearance: none;
  flex: 1;
  height: 17px;
  border: solid #a9b8cc;
  border-width: 2px 0 0 1px;
}
progress::-webkit-progress-bar {
  background: #dbd8d1;
}
progress::-webkit-progress-value {
  background: #16306f;
}

/* status bar */
.status {
  height: 9px;
  flex: none;
  display: grid;
  grid-template-columns: 50% 79px 68px 48px 47px 47px 47px 45px 1fr;
  border-top: 1px solid #f4f3f0;
  padding-top: 3px;
}
.status i {
  border-right: 1px solid #a19e98;
}
.status b {
  width: 20px;
  margin: 1px 0 0 3px;
  background: repeating-linear-gradient(90deg, #7d9c34 0 2px, #cfd8ae 2px 3px);
}
.pointer {
  position: absolute;
  left: 477px;
  top: 54px;
  width: 10px;
  height: 15px;
}
```
FILE: script.js
```js
// [x, high, low] points of the price curve, two segments (gap on 21 Apr)
var segments = [
[[211,415,429],[214,407,417],[217,400,417],[219,382,405],[222,378,390],[225,382,388],[228,379,387],[232,382,388],[234,388,395],[237,391,396],[240,388,398],[243,378,402],[245,387,395],[247,390,405],[249,384,395],[253,387,403],[255,393,410],[258,397,413],[260,398,408],[263,391,403],[267,397,407],[272,395,403],[275,395,405],[278,392,402],[281,385,395],[283,367,393],[286,365,380],[288,339,367],[290,350,362],[292,362,372],[294,362,375],[296,347,370],[298,345,368],[300,339,363],[302,355,373],[304,367,398],[307,387,398],[309,393,400],[312,395,407],[315,393,402],[320,393,400],[325,394,400],[328,377,398],[330,387,398],[332,395,417],[334,405,425],[337,407,422],[338,402,418],[341,408,425],[344,413,431],[346,403,423],[348,412,425],[350,411,424],[351,383,415]],
[[352.7,203,236],[355,222,255],[357,235,266],[359,257,283],[361,265,298],[364,262,283],[367,243,280],[369,248,286],[372,250,284],[374,243,268],[377,250,270],[378,255,277],[381,247,272],[383,248,270],[386,258,283],[388,262,276],[391,252,268],[397,252,258],[400,250,258],[402,255,265],[405,257,268],[408,255,263],[411,238,258],[413,228,243],[417,223,240],[419,232,250],[422,228,242],[424,220,235],[425,188,240],[427,180,205],[429,173,188],[432,180,193],[435,185,198],[438,190,200],[442,185,200],[446,182,192],[451,175,185],[453,172,200],[455,188,217],[458,208,225],[460,218,238],[463,218,232],[467,228,245],[470,242,265],[472,232,258],[474,218,235],[475,209,228],[478,213,222],[482,213,220],[485,208,218],[489,200,217],[492,210,220],[496,215,225],[499,202,218],[502,210,225],[505,222,241],[507,191,242],[508.500,232,266],[510.300,248,268],[512,243,262],[515,235,248],[518,237,248],[522,242,252],[524,245,252],[527,248,260],[529,250,263],[532,252,257],[535,253,258],[537,253,263],[539,237,258],[541,228,242],[543,218,238],[544,177,222],[546,178,190],[548,187,195],[549,188,215],[551,202,220],[553,202,238],[555,220,232],[556,220,238],[558,216,227],[562,222,232],[565,212,233],[567,218,226],[569,212,220],[572,218,232],[575,225,231],[578,227,235],[583,230,238],[585,222,230],[588,220,227],[591,215,222],[592,201,218],[595,199,217],[598,205,218],[601,215,223],[605,215,225],[607,220,227],[610,210,222],[617,210,217],[620,205,213],[622,198,212],[625,200,217],[628,201,215],[632,203,218],[635,207,220],[637.700,210,234],[640,208,225],[643,205,218],[645,193,208],[648,191,200],[653,187,197],[657,187,193],[662,188,195],[664,188,198],[667,197,210],[670,202,215],[673,205,215],[677,200,215],[680,203,220],[683,200,213],[685,200,218],[687,197,220],[689,217,230],[691,228,240],[694,230,240],[697,228,236],[701,227,233],[705,223,230],[707,224,232],[708.700,223,247],[710,205,240],[712,198,213],[714,187,205],[716,183,195],[719,188,205],[721,185,198],[723,172,193],[724.700,157,188],[727,147,161],[729,147,160],[731,140,150],[734,140,147],[738,143,148],[743,147,153],[747,136,147],[750,140,153],[753,142,158],[755,153,168],[758,160,171],[760,162,173],[762,135,175],[764,138,160],[766,128,147],[769,128,143],[772,133,142],[774,128,140],[776,125,135],[777.700,106,127],[779.300,113,133],[781,130,152],[783,142,168],[785,150,162],[787,143,155],[789,150,164],[791,132,157],[793,130,152],[795,140,163],[797,160,173],[799,167,188],[801,168,188],[804,172,193],[807,173,192],[809,187,206],[812,187,198],[816,187,198],[820,195,205],[824,192,200],[827,192,203],[831,191,198],[834,192,200],[836,197,220],[839,198,218],[842,213,230],[844,218,237],[847,225,247],[850,216,232],[852,225,250],[854,225,247],[857,238,257],[861,240,253],[864,233,248],[867,225,240],[870,225,231],[873,226,232],[877,227,237],[881,224,238],[882.300,237,255],[884.300,248,262],[887,245,260],[889.300,238,257],[893,244,257],[896,248,262],[899,255,267],[903,252,258],[907,250,258],[911,245,255],[915,242,252],[919,247,252],[921,235,250],[923,228,245],[925,237,252],[928,245,257],[930,245,268],[931.500,255,281],[933,248,268],[935,247,257],[939,246,256],[943,250,260],[947,253,262],[952,252,258],[957,247,254],[962,248,253],[965,252,265],[968,243,258],[973,243,252],[974.500,210,251],[976,197,217],[979,189,208],[981,195,208],[983,198,205],[986,192,202],[990,188,197],[994,193,200],[998,192,200],[1003,190,197],[1006,187,197],[1008,178,190],[1010,172,183],[1012,162,175],[1014,150,167],[1016,140,162],[1018,134,150],[1021,138,148],[1023,142,153],[1025,147,157],[1027,148,158]]
];

var d = '';
segments.forEach(function(points){
	var i = 0, n = 0, prevHigh = 0, prevLow = 999;
	var last = points[points.length - 1][0];
	for(var x = points[0][0]; x <= last + 1; x += 1.77){
		while(i < points.length - 2 && points[i + 1][0] < x) i++;
		var a = points[i], b = points[i + 1];
		// nearest point keeps the spikes sharp
		var p = x - a[0] < b[0] - x ? a : b;
		// uneven ends so bars do not form a smooth band
		var high = p[1] + (n * 7 % 4) * 0.5;
		var low = p[2] - (n * 11 % 3) * 0.5;
		// each bar touches the one before it
		if(n > 0){
			high = Math.min(high, prevLow - 1);
			low = Math.max(low, prevHigh + 1);
		}
		d += 'M' + x.toFixed(1) + ' ' + high.toFixed(1) + 'V' + low.toFixed(1);
		prevHigh = high;
		prevLow = low;
		n++;
	}
});
document.getElementById('bars').setAttribute('d', d);
```
